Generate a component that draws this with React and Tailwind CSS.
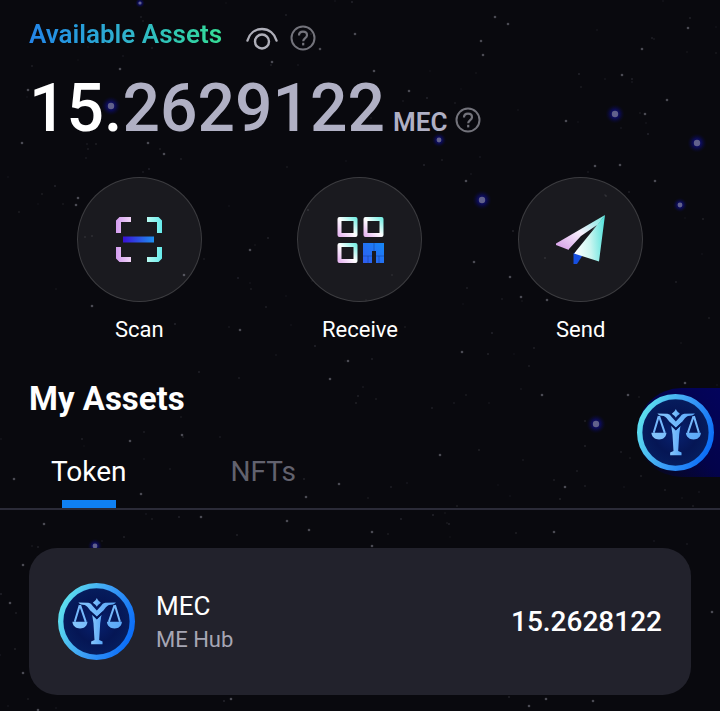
import { useState } from "react";

// Bright stars with a blue halo: x, y, radius
const glowStars = [
  [140, 3, 2],
  [111, 106, 4],
  [439, 140, 3],
  [615, 114, 4],
  [697, 143, 4],
  [482, 200, 4],
  [680, 205, 3],
  [596, 424, 4],
  [95, 546, 3],
];

const smallStars = [
  [481, 41], [483, 55], [495, 17], [508, 24], [688, 28], [642, 49], [622, 75], [667, 100],
  [566, 121], [645, 114], [466, 181], [595, 166], [620, 165], [655, 181], [374, 71], [409, 91],
  [272, 62], [355, 34], [320, 49], [120, 69], [148, 143], [164, 154], [22, 143], [28, 90],
  [78, 198], [76, 205], [184, 275], [92, 306], [521, 297], [547, 300], [510, 277], [348, 361],
  [330, 379], [182, 435], [130, 441], [339, 484], [306, 497], [141, 494], [14, 479], [201, 517],
  [287, 521], [44, 524], [309, 530], [23, 565], [10, 603], [23, 673], [231, 699], [38, 710],
  [546, 699], [593, 701], [529, 706], [372, 532], [372, 546], [554, 532], [712, 612], [542, 395],
  [685, 383], [628, 395], [565, 487], [440, 455], [462, 352], [250, 250], [240, 330], [474, 262],
];

let seed = 7;
const rand = () => {
  seed = (seed * 16807) % 2147483647;
  return seed / 2147483647;
};
const dust = Array.from({ length: 240 }, () => [
  Math.round(rand() * 720),
  Math.round(rand() * 711),
  0.05 + rand() * 0.13,
]);

function StarField() {
  return (
    <svg
      className="absolute inset-0 w-full h-full pointer-events-none"
      viewBox="0 0 720 711"
      preserveAspectRatio="xMidYMin slice"
      aria-hidden="true"
    >
      <defs>
        <radialGradient id="halo">
          <stop offset="0" stopColor="#1717a0" stopOpacity="0.9" />
          <stop offset="0.5" stopColor="#0d0d78" stopOpacity="0.6" />
          <stop offset="1" stopColor="#08083c" stopOpacity="0" />
        </radialGradient>
      </defs>
      {dust.map(([x, y, o], i) => (
        <circle key={i} cx={x} cy={y} r="1" fill="#a5a5b5" opacity={o} />
      ))}
      {smallStars.map(([x, y], i) => (
        <circle key={i} cx={x} cy={y} r="1.3" fill="#8c8c98" opacity="0.5" />
      ))}
      {glowStars.map(([x, y, r], i) => (
        <g key={i}>
          <circle cx={x} cy={y} r={r * 2.4} fill="url(#halo)" />
          <circle cx={x} cy={y} r={r * 0.8} fill="#70708f" opacity="0.85" />
        </g>
      ))}
    </svg>
  );
}

function EyeIcon() {
  return (
    <svg className="w-8 h-6" viewBox="0 0 32 24" fill="none" stroke="#aeaeb8" strokeWidth="2.4">
      <path d="M1.5 14.500C3.500 7.500 9 3 16 3S28.500 7.500 30.500 14.500" strokeLinecap="round" />
      <circle cx="16" cy="15.500" r="7" />
    </svg>
  );
}

function HelpIcon() {
  return (
    <svg className="w-[26px] h-[26px]" viewBox="0 0 26 26" fill="none" stroke="#73737b" strokeWidth="2">
      <circle cx="13" cy="13" r="11.500" />
      <path d="M9 10.500C9 8 10.700 6.700 13 6.700s4 1.400 4 3.500c0 2.900-3.800 2.800-3.800 6" strokeWidth="2.200" />
      <path d="M13.200 17.800v2.600" strokeWidth="2.200" />
    </svg>
  );
}

function ScanIcon() {
  return (
    <svg className="w-12 h-12" viewBox="0 0 48 48">
      <defs>
        <linearGradient id="scanBar">
          <stop offset="0" stopColor="#3a10d8" />
          <stop offset="1" stopColor="#1e90f0" />
        </linearGradient>
        <linearGradient id="scanLeft">
          <stop offset="0" stopColor="#d49df0" />
          <stop offset="1" stopColor="#f0d4f6" />
        </linearGradient>
        <linearGradient id="scanRight">
          <stop offset="0" stopColor="#b8fbf2" />
          <stop offset="1" stopColor="#66ecec" />
        </linearGradient>
      </defs>
      <path fill="url(#scanLeft)" d="M1 17V4.500L4.500 1H16v5H6v11zM1 31v11.500L4.500 46H16v-5H6V31z" />
      <path fill="url(#scanRight)" d="M47 17V4.500L43.500 1H32v5h10v11zM47 31v11.500L43.500 46H32v-5h10V31z" />
      <path fill="url(#scanBar)" d="M8 20.500h31v6H8z" />
    </svg>
  );
}

function ReceiveIcon() {
  return (
    <svg className="w-12 h-12" viewBox="0 0 48 48" fill="none">
      <defs>
        <linearGradient id="qrBox" x1="0" y1="1" x2="1" y2="0">
          <stop offset="0" stopColor="#e8b9f2" />
          <stop offset="0.5" stopColor="#ffffff" />
          <stop offset="1" stopColor="#7ff0e6" />
        </linearGradient>
        <linearGradient id="qrFill" x1="0" y1="1" x2="1" y2="0">
          <stop offset="0" stopColor="#2f5cf0" />
          <stop offset="1" stopColor="#1688f5" />
        </linearGradient>
      </defs>
      <g stroke="url(#qrBox)" strokeWidth="4" strokeLinejoin="round">
        <rect x="3.500" y="3" width="16" height="16" />
        <rect x="29.500" y="3" width="16" height="16" />
        <rect x="3.500" y="29" width="16" height="16" />
      </g>
      <path fill="url(#qrFill)" d="M27 27h21v20h-8V35h-4v12h-9z" />
      <path stroke="#15409c" strokeWidth="0.8" opacity="0.7" d="M38 27v8M27 40h9M40 40h8M32 40v7M43 40v7" />
    </svg>
  );
}

function SendIcon() {
  return (
    <svg className="w-[52px] h-[52px]" viewBox="0 0 52 52">
      <defs>
        <linearGradient id="planeWing" x1="0" y1="1" x2="1" y2="0">
          <stop offset="0.1" stopColor="#dba9ea" />
          <stop offset="0.5" stopColor="#f7effb" />
          <stop offset="1" stopColor="#72eadf" />
        </linearGradient>
        <linearGradient id="planeBody" x1="0" y1="0.4" x2="1" y2="0.3">
          <stop offset="0" stopColor="#ffffff" />
          <stop offset="0.5" stopColor="#c9f5f0" />
          <stop offset="1" stopColor="#55e3dc" />
        </linearGradient>
      </defs>
      <path d="M18.500 38l9 3.500L22 50h-3.500z" fill="#164fe0" />
      <path d="M1 29.500L50 1 42 12 14 36 1 31z" fill="url(#planeWing)" />
      <path d="M50 1L44 47.500 19 39.500 43 10z" fill="url(#planeBody)" />
      <path d="M42 11L26 22 13.500 35.500l5.500 4 6-10z" fill="#17161b" />
    </svg>
  );
}

function ScalesLogo({ id }) {
  return (
    <svg className="block w-[77px] h-[77px]" viewBox="51 44 230 230" aria-hidden="true">
      <defs>
        <linearGradient id={`${id}-ring`} x1="0" y1="0.3" x2="1" y2="0.7">
          <stop offset="0" stopColor="#5de0ee" />
          <stop offset="0.5" stopColor="#3d9ff5" />
          <stop offset="1" stopColor="#0a6cf8" />
        </linearGradient>
        <radialGradient id={`${id}-disc`}>
          <stop offset="0" stopColor="#082272" />
          <stop offset="0.6" stopColor="#051655" />
          <stop offset="0.9" stopColor="#061c5c" />
          <stop offset="1" stopColor="#0a3a8c" />
        </radialGradient>
        <linearGradient id={`${id}-mark`}>
          <stop offset="0" stopColor="#86c6fc" />
          <stop offset="1" stopColor="#5aa8f8" />
        </linearGradient>
      </defs>
      <circle cx="166" cy="159" r="107" fill={`url(#${id}-disc)`} stroke={`url(#${id}-ring)`} strokeWidth="16" />
      <g fill={`url(#${id}-mark)`}>
        <path d="M167 89c2 6 6 9 12 14-5 4-9 6-12 12-3-6-7-8-12-12 6-5 10-8 12-14z" />
        <path d="M112 102l30 1c6 1 9 4 12 9l13 14 13-14c3-5 6-8 12-9l32-1c-5 7-13 6-21 8-7 3-11 10-17 17l-19 17-19-17c-6-7-10-14-17-17-8-2-15-1-19-8z" />
        <path d="M153 138l14 15 14-15-4 26-3 50 10 5v8h-34v-8l10-5-3-50z" />
        <path d="M94 160h45c-1 12-9 20-22 20s-22-8-23-20zM197 160h45c-1 12-9 20-22 20s-22-8-23-20z" />
      </g>
      <path d="M148 131l19 18 19-18" stroke="#051655" strokeWidth="5" fill="none" />
      <path
        d="M116 110l-15 50M117 110l17 50M220 110l-17 50M221 110l15 50"
        stroke="#74b8fc"
        strokeWidth="6"
        fill="none"
      />
    </svg>
  );
}

const actions = [
  { label: "Scan", Icon: ScanIcon },
  { label: "Receive", Icon: ReceiveIcon },
  { label: "Send", Icon: SendIcon },
];

const tabs = ["Token", "NFTs"];

function App() {
  const [activeTab, setActiveTab] = useState("Token");
  const [hidden, setHidden] = useState(false);

  return (
    <div className="relative min-h-screen overflow-hidden bg-[#09090e] pb-4 font-['Roboto',sans-serif] text-white">
      <StarField />

      <main className="relative">
        {/* Balance */}
        <section className="px-[29px] pt-4">
          <div className="flex items-center">
            <h2 className="bg-linear-to-r from-[#2484e8] via-[#30b2cd] to-[#36dc94] bg-clip-text text-[26px] leading-9 font-semibold text-transparent">
              Available Assets
            </h2>
            <button
              className="ml-6 mt-2"
              aria-label="Toggle balance"
              onClick={() => setHidden(!hidden)}
            >
              <EyeIcon />
            </button>
            <button className="ml-3 mt-2" aria-label="About available assets">
              <HelpIcon />
            </button>
          </div>
          <div className="mt-5 flex items-baseline">
            <p className="text-[66px] leading-[73px] font-medium">
              {hidden ? (
                "****"
              ) : (
                <>
                  15.<span className="text-[#b0b0c4]">2629122</span>
                </>
              )}
            </p>
            <span className="ml-2 text-[26px] font-semibold text-[#b0b0c4]">MEC</span>
            <button className="ml-2 self-end mb-3" aria-label="About MEC">
              <HelpIcon />
            </button>
          </div>
        </section>

        {/* Actions */}
        <nav className="mt-8 grid grid-cols-3 px-[29px]">
          {actions.map(({ label, Icon }) => (
            <button key={label} className="flex flex-col items-center">
              <span className="flex size-[125px] items-center justify-center rounded-full border border-white/15 bg-white/7">
                <Icon />
              </span>
              <span className="mt-3 text-[22px] leading-8">{label}</span>
            </button>
          ))}
        </nav>

        {/* Assets */}
        <section>
          <h1 className="mt-[33px] px-[29px] text-[33px] leading-10 font-bold">My Assets</h1>
          <div role="tablist" className="mt-[33px] flex gap-[104px] border-b-2 border-[#2b2b38] px-[51px]">
            {tabs.map((tab) => (
              <button
                key={tab}
                role="tab"
                aria-selected={activeTab === tab}
                onClick={() => setActiveTab(tab)}
                className={`flex flex-col items-center gap-2 text-[28px] leading-10 ${
                  activeTab === tab ? "text-white" : "text-[#62626e]"
                }`}
              >
                {tab}
                <span className={`h-2 w-[54px] ${activeTab === tab ? "bg-[#0f80f2]" : "bg-transparent"}`} />
              </button>
            ))}
          </div>

          <div className="mx-[29px] mt-[38px] flex items-center rounded-[28px] bg-[#22222c] px-[29px] py-[35px]">
            <ScalesLogo id="token" />
            <div className="ml-[21px] flex-1">
              <p className="text-[26px] leading-9">MEC</p>
              <p className="text-[22px] leading-8 text-[#a6a6b4]">ME Hub</p>
            </div>
            <p className="text-[28px] font-medium">15.2628122</p>
          </div>
        </section>
      </main>

      {/* Floating shortcut */}
      <div className="absolute right-0 top-[388px] rounded-l-full bg-linear-to-bl from-[#03035c] via-[#03034a] to-[#02021c]/0 py-[6px] pr-[6px]">
        <button className="block rounded-full" aria-label="Open ME Hub">
          <ScalesLogo id="float" />
        </button>
      </div>
    </div>
  );
}

export default App;
